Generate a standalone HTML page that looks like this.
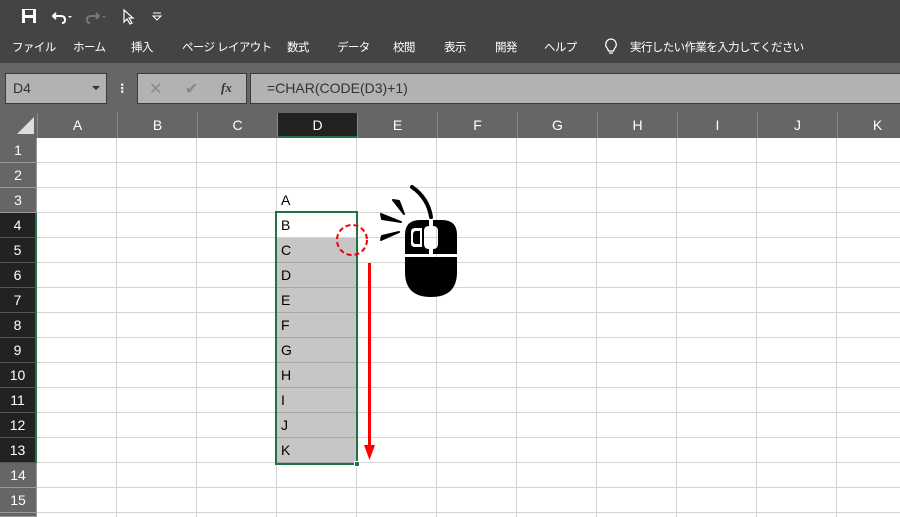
<!DOCTYPE html>
<html><head><meta charset="utf-8"><style>
*{margin:0;padding:0;box-sizing:border-box}
html,body{width:900px;height:517px;overflow:hidden}
body{position:relative;background:#fff;font-family:"Liberation Sans","Noto Sans CJK JP",sans-serif}
.abs{position:absolute}
#title{left:0;top:0;width:900px;height:33px;background:#444}
#ribbon{left:0;top:33px;width:900px;height:30px;background:#444;color:#fff;font-size:11.5px;letter-spacing:-0.6px}
#ribbon span{position:absolute;top:6px;white-space:nowrap}
#fbar{left:0;top:63px;width:900px;height:50px;background:#666}
.box{position:absolute;background:#b2b2b2;border:1px solid #3a3a3a}
#colh{left:0;top:113px;width:900px;height:25px;background:#666}
.ch{position:absolute;top:113px;height:25px;width:80px;color:#fff;font-size:14px;text-align:center;line-height:25px;border-left:1px solid #888}
.rh{position:absolute;left:0;width:37px;height:25px;color:#fff;font-size:14px;text-align:center;line-height:25px;background:#666;border-bottom:1px solid #999;border-right:1px solid #999}
.rh.s{background:#222;border-right:2px solid #217346;border-bottom:1px solid #555}
#grid{left:37px;top:138px;width:863px;height:379px;
background-image:repeating-linear-gradient(to right,transparent 0,transparent 79px,#d4d4d4 79px,#d4d4d4 80px),repeating-linear-gradient(to bottom,transparent 0,transparent 24px,#d4d4d4 24px,#d4d4d4 25px)}
.cell{position:absolute;left:281px;font-size:14px;color:#000;height:25px;line-height:25px}
</style></head><body>
<div id="title" class="abs"></div>
<svg class="abs" style="left:20px;top:7px" width="150" height="20" viewBox="0 0 150 20">
<rect x="2" y="2" width="14" height="14" fill="#fff"/><rect x="5" y="3" width="8" height="5" fill="#444"/><rect x="5" y="11" width="8" height="5" fill="#444"/>
<path d="M36 6 L33 9 L36 12 M33 9 H41 Q45 9 45 13 Q45 16 42 16" fill="none" stroke="#fff" stroke-width="2"/>
<path d="M48 9 l2 2 l2-2z" fill="#fff"/>
<path d="M76 6 L79 9 L76 12 M79 9 H71 Q67 9 67 13 Q67 16 70 16" fill="none" stroke="#777" stroke-width="2"/>
<path d="M82 9 l2 2 l2-2z" fill="#777"/>
<path d="M104 3 L104 15 L107 12 L110 17 L112 16 L109 11 L113 11 Z" fill="none" stroke="#fff" stroke-width="1.2"/>
<path d="M133 6 h8 M133 9 l4 4 l4-4z" fill="none" stroke="#fff" stroke-width="1"/>
</svg>
<div id="ribbon" class="abs">
<span style="left:12px">ファイル</span><span style="left:73px">ホーム</span><span style="left:131px">挿入</span><span style="left:182px">ページ レイアウト</span><span style="left:287px">数式</span><span style="left:337px">データ</span><span style="left:393px">校閲</span><span style="left:444px">表示</span><span style="left:495px">開発</span><span style="left:544px">ヘルプ</span>
<svg style="position:absolute;left:604px;top:5px" width="14" height="18" viewBox="0 0 14 18"><path d="M7 1 A5.5 5.5 0 0 0 3.5 10.5 L4.5 13 H9.5 L10.5 10.5 A5.5 5.5 0 0 0 7 1Z M5 15 H9" fill="none" stroke="#fff" stroke-width="1.3"/></svg>
<span style="left:630px">実行したい作業を入力してください</span>
</div>
<div id="fbar" class="abs"></div>
<div class="box" style="left:5px;top:73px;width:102px;height:31px;color:#333;font-size:14px;line-height:29px;padding-left:7px">D4<span style="position:absolute;right:6px;top:12px;border:4px solid transparent;border-top:4px solid #333"></span></div>
<div class="abs" style="left:120px;top:80px;color:#fff;font-size:14px;font-weight:bold">⁝</div>
<div class="box" style="left:137px;top:73px;width:110px;height:31px"></div>
<div class="abs" style="left:149px;top:79px;color:#888;font-size:16px">✕</div>
<div class="abs" style="left:185px;top:79px;color:#888;font-size:16px">✔</div>
<div class="abs" style="left:221px;top:80px;color:#333;font-size:13px;font-style:italic;font-family:'Liberation Serif',serif;font-weight:bold">fx</div>
<div class="box" style="left:250px;top:73px;width:652px;height:31px;color:#333;font-size:14px;line-height:29px;padding-left:16px">=CHAR(CODE(D3)+1)</div>
<div id="colh" class="abs"></div>
<svg class="abs" style="left:16px;top:116px" width="19" height="19"><path d="M18 1 V18 H1 Z" fill="#ddd"/></svg>
<div class="ch" style="left:37px">A</div><div class="ch" style="left:117px">B</div><div class="ch" style="left:197px">C</div>
<div class="ch" style="left:277px;background:#222;border-bottom:2px solid #217346">D</div>
<div class="ch" style="left:357px">E</div><div class="ch" style="left:437px">F</div><div class="ch" style="left:517px">G</div><div class="ch" style="left:597px">H</div><div class="ch" style="left:677px">I</div><div class="ch" style="left:757px">J</div><div class="ch" style="left:837px">K</div>
<div class="rh" style="top:138px">1</div><div class="rh" style="top:163px">2</div><div class="rh" style="top:188px">3</div>
<div class="rh s" style="top:213px">4</div><div class="rh s" style="top:238px">5</div><div class="rh s" style="top:263px">6</div><div class="rh s" style="top:288px">7</div><div class="rh s" style="top:313px">8</div><div class="rh s" style="top:338px">9</div><div class="rh s" style="top:363px">10</div><div class="rh s" style="top:388px">11</div><div class="rh s" style="top:413px">12</div><div class="rh s" style="top:438px">13</div>
<div class="rh" style="top:463px">14</div><div class="rh" style="top:488px">15</div><div class="rh" style="top:513px;height:4px"></div>
<div id="grid" class="abs"></div>
<div class="abs" style="left:277px;top:238px;width:79px;height:225px;background:#c6c6c6;background-image:repeating-linear-gradient(to bottom,transparent 0,transparent 24px,#a8a8a8 24px,#a8a8a8 25px)"></div>
<div class="abs" style="left:275px;top:211px;width:83px;height:254px;border:2px solid #217346"></div>
<div class="abs" style="left:354px;top:461px;width:6px;height:6px;background:#217346;border:1px solid #fff"></div>
<div class="cell" style="top:188px">A</div><div class="cell" style="top:213px">B</div><div class="cell" style="top:238px">C</div><div class="cell" style="top:263px">D</div><div class="cell" style="top:288px">E</div><div class="cell" style="top:313px">F</div><div class="cell" style="top:338px">G</div><div class="cell" style="top:363px">H</div><div class="cell" style="top:388px">I</div><div class="cell" style="top:413px">J</div><div class="cell" style="top:438px">K</div>
<svg class="abs" style="left:0;top:0" width="900" height="517">
<circle cx="352" cy="240" r="15" fill="none" stroke="#e00" stroke-width="2" stroke-dasharray="5 3"/>
<line x1="369.5" y1="263" x2="369.5" y2="448" stroke="#f00" stroke-width="3"/>
<path d="M364 445 L375 445 L369.5 460 Z" fill="#f00"/>
<path d="M412 187 Q428 198 431 217" fill="none" stroke="#000" stroke-width="4" stroke-linecap="round"/>
<path d="M393 200 L404 214 L399 201 Z" fill="#000" stroke="#000" stroke-width="2" stroke-linejoin="round"/>
<path d="M381 214 L401 222 L382 219 Z" fill="#000" stroke="#000" stroke-width="2" stroke-linejoin="round"/>
<path d="M381 240 L399 232 L382 236 Z" fill="#000" stroke="#000" stroke-width="2" stroke-linejoin="round"/>
<path d="M405 254 V235 Q405 220 420 220 H429 V226 Q424 226 424 231 V244 Q424 249 429 249 V254 Z" fill="#000"/>
<path d="M433 220 H442 Q457 220 457 235 V254 H433 V249 Q438 249 438 244 V231 Q438 226 433 226 Z" fill="#000"/>
<path d="M411 232 Q411 228 415 228 H422 V247 H415 Q411 247 411 243 Z" fill="#fff"/>
<path d="M413 235 Q413 231 416 231 H420 V244 H416 Q413 244 413 241 Z" fill="#000"/>
<path d="M405 257 H457 V272 Q457 297 431 297 Q405 297 405 272 Z" fill="#000"/>
</svg>
</body></html>
